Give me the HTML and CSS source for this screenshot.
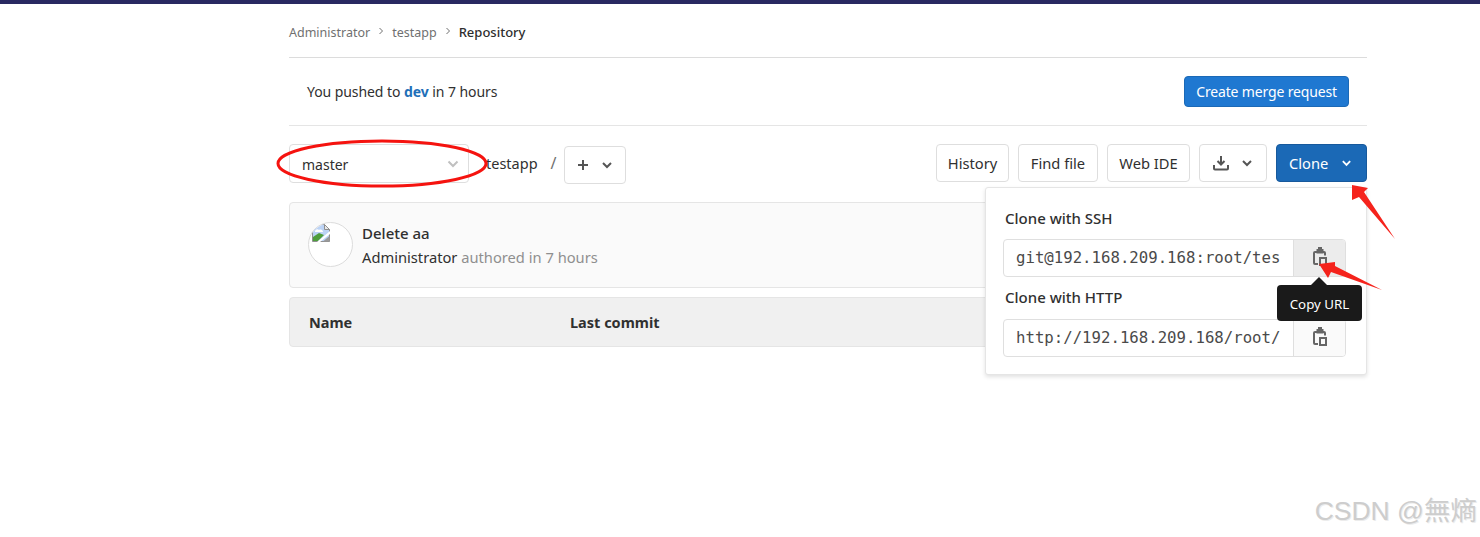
FILE: index.html
```html
<!DOCTYPE html>
<html lang="en">
<head>
<meta charset="utf-8">
<title>Repository</title>
<link rel="stylesheet" href="styles.css">
</head>
<body>
<div class="topbar"></div>
<main class="page">
  <nav class="crumbs">
    <span>Administrator</span>
    <svg class="sep" viewBox="0 0 8 8"><path d="M2.500 1 5.500 4 2.500 7" fill="none" stroke="currentColor" stroke-width="1"/></svg>
    <span>testapp</span>
    <svg class="sep" viewBox="0 0 8 8"><path d="M2.500 1 5.500 4 2.500 7" fill="none" stroke="currentColor" stroke-width="1"/></svg>
    <strong>Repository</strong>
  </nav>
  <section class="pushed">
    <span class="pushed-text">You pushed to <b class="branch">dev</b> in 7 hours</span>
    <button class="btn primary-light">Create merge request</button>
  </section>
  <section class="toolbar">
    <div class="left">
      <div class="select"><span>master</span>
        <svg class="chev pale" viewBox="0 0 12 8"><path d="M1.500 1.500 6 6l4.500-4.500" fill="none" stroke="currentColor" stroke-width="2"/></svg>
      </div>
      <span class="repo">testapp</span>
      <span class="slash">/</span>
      <button class="btn plus">
        <svg class="plus-i" viewBox="0 0 12 12"><path d="M6 1v10M1 6h10" fill="none" stroke="currentColor" stroke-width="2"/></svg>
        <svg class="chev" viewBox="0 0 12 8"><path d="M2 2 6 6l4-4" fill="none" stroke="currentColor" stroke-width="2"/></svg>
      </button>
    </div>
    <div class="right">
      <button class="btn w-history">History</button>
      <button class="btn w-find">Find file</button>
      <button class="btn w-ide">Web IDE</button>
      <button class="btn dl">
        <svg class="dl-i" viewBox="0 0 16 16"><path d="M8 1v8M4.500 6 8 9.500 11.500 6" fill="none" stroke="currentColor" stroke-width="2"/><path d="M1 10v3.500a1 1 0 0 0 1 1h12a1 1 0 0 0 1-1V10" fill="none" stroke="currentColor" stroke-width="2"/></svg>
        <svg class="chev" viewBox="0 0 12 8"><path d="M2 2 6 6l4-4" fill="none" stroke="currentColor" stroke-width="2"/></svg>
      </button>
      <button class="btn clone">Clone
        <svg class="chev" viewBox="0 0 12 8"><path d="M2 2 6 6l4-4" fill="none" stroke="currentColor" stroke-width="2"/></svg>
      </button>
    </div>
  </section>
  <section class="commit">
    <div class="avatar">
      <svg class="broken" viewBox="0 0 18 18">
        <path d="M.5.500h12l5 5v12H.5z" fill="#bcd3f5" stroke="#8f8f8f"/>
        <path d="M3 7c1-2 3-2 4-1 2-1 4 0 4 2H3z" fill="#fff"/>
        <path d="M12.500.5v5h5z" fill="#e8e8e8" stroke="#8f8f8f"/>
        <path d="M1 17V13l6-4 5 2-6 6z" fill="#4f9e3c"/>
        <path d="M5 18 18 7v3L8 18z" fill="#fff"/>
        <path d="M11 17.500 17.500 12v5.500z" fill="#9a9a9a"/>
      </svg>
    </div>
    <div class="commit-text">
      <div class="title">Delete aa</div>
      <div class="meta">Administrator <span class="muted">authored in 7 hours</span></div>
    </div>
  </section>
  <section class="table-head">
    <span class="c-name">Name</span>
    <span>Last commit</span>
  </section>

  <aside class="dropdown">
    <label class="dd-label">Clone with SSH</label>
    <div class="field hover">
      <span class="url">git@192.168.209.168:root/tes</span>
      <span class="copy"><svg class="clip" viewBox="0 0 14 19"><path d="M4 5H2a1 1 0 0 0-1 1V16a1 1 0 0 0 1 1h3M10 5h1a1 1 0 0 1 1 1V8.500" fill="none" stroke="currentColor" stroke-width="2"/><path d="M5 0h4v2h1.500v4.500h-7V2H5z" fill="currentColor"/><rect x="7" y="11" width="6" height="7" fill="none" stroke="currentColor" stroke-width="2"/></svg></span>
    </div>
    <label class="dd-label second">Clone with HTTP</label>
    <div class="field lower">
      <span class="url">http://192.168.209.168/root/</span>
      <span class="copy"><svg class="clip" viewBox="0 0 14 19"><path d="M4 5H2a1 1 0 0 0-1 1V16a1 1 0 0 0 1 1h3M10 5h1a1 1 0 0 1 1 1V8.500" fill="none" stroke="currentColor" stroke-width="2"/><path d="M5 0h4v2h1.500v4.500h-7V2H5z" fill="currentColor"/><rect x="7" y="11" width="6" height="7" fill="none" stroke="currentColor" stroke-width="2"/></svg></span>
    </div>
    <div class="tooltip">Copy URL</div>
  </aside>
</main>

<svg class="marks" viewBox="0 0 1480 537">
  <ellipse cx="382" cy="163.500" rx="104" ry="22.500" fill="none" stroke="#f5130f" stroke-width="3"/>
  <path d="M1352 185 1368 188 1364 192 1395 239 1359 197 1352 200z" fill="#f5231c"/>
  <path d="M1319 264 1335 262 1335 266 1382 290 1331 272 1328 278z" fill="#f5231c"/>
</svg>
<div class="watermark">CSDN @無熵</div>
</body>
</html>
```

FILE: styles.css
```css
* { box-sizing: border-box; }
html, body { margin: 0; height: 537px; overflow: hidden; background: #fff; }
body {
  font-family: "Noto Sans", "Open Sans", sans-serif;
  font-size: 14px;
  color: #303030;
  position: relative;
}
.topbar { height: 4px; background: #292961; }
.page { width: 1078px; margin-left: 289px; position: relative; }

.crumbs {
  height: 54px;
  border-bottom: 1px solid #dcdcdc;
  display: flex;
  align-items: center;
  gap: 7px;
  font-size: 12.500px;
  color: #707070;
  padding-top: 3px;
}
.crumbs strong { color: #2e2e2e; font-weight: 500; font-size: 13px; }
.sep { width: 8px; height: 8px; margin: -3px 0 0 0; color: #707070; }

.pushed {
  height: 68px;
  border-bottom: 1px solid #e5e5e5;
  display: flex;
  align-items: center;
  justify-content: space-between;
  padding: 0 18px;
}
.pushed-text { letter-spacing: -.07px; }
.branch { color: #1f6fb8; font-weight: 700; }

.btn {
  font: inherit;
  font-size: 14.700px;
  height: 38px;
  padding: 0 12px;
  background: #fff;
  color: #303030;
  border: 1px solid #dedede;
  border-radius: 4px;
  display: inline-flex;
  align-items: center;
  justify-content: center;
}
.w-history { width: 73px; padding: 0; }
.w-find { width: 80px; padding: 0; }
.w-ide { width: 83px; padding: 0; }
.primary-light {
  font-size: 14px;
  letter-spacing: -.15px;
  height: 31px;
  background: #1f78d1;
  border-color: #1b69b6;
  color: #fff;
  padding: 0 11px;
}

.toolbar {
  display: flex;
  justify-content: space-between;
  margin-top: 18px;
  height: 38px;
}
.left, .right { display: flex; align-items: center; }
.right { gap: 9px; }
.select {
  width: 180px;
  height: 39px;
  margin-top: 1px;
  border: 1px solid #dedede;
  border-radius: 4px;
  display: flex;
  align-items: center;
  justify-content: space-between;
  padding: 1px 9px 0 12px;
}
.chev { width: 12px; height: 8px; color: #555; }
.chev.pale { color: #c0c0c0; }
.repo { margin-left: 17px; font-size: 14.500px; }
.slash { margin-left: 13px; color: #707070; font-size: 16px; }
.plus { margin-left: 7px; margin-top: 4px; width: 62px; padding: 0 12px; justify-content: space-between; height: 38px; }
.plus-i { width: 12px; height: 12px; color: #555; }
.dl { width: 68px; justify-content: space-between; padding: 0 13px; }
.dl-i { width: 16px; height: 16px; color: #555; }
.clone {
  width: 91px;
  background: #1b69b6;
  border-color: #17599c;
  color: #fff;
  justify-content: space-between;
  padding: 0 14px 0 12px;
}
.clone .chev { color: #fff; width: 11px; }

.commit {
  margin-top: 20px;
  height: 86px;
  border: 1px solid #e5e5e5;
  border-radius: 4px;
  background: #fafafa;
  display: flex;
  align-items: center;
  padding: 0 0 0 18px;
  gap: 9px;
}
.avatar {
  width: 45px;
  height: 45px;
  margin-top: -2px;
  border: 1px solid #dcdcdc;
  border-radius: 50%;
  background: #fff;
  flex: none;
  overflow: hidden;
}
.broken { width: 18px; height: 18px; display: block; margin: 1px 0 0 3px; }
.title { font-size: 15px; font-weight: 500; line-height: 20px; }
.meta { font-size: 14.700px; line-height: 20px; margin-top: 4px; }
.muted { color: #8f8f8f; }

.table-head {
  margin-top: 9px;
  height: 50px;
  border: 1px solid #e5e5e5;
  border-radius: 4px;
  background: #f0f0f0;
  display: flex;
  align-items: center;
  padding-left: 19px;
  font-weight: 700;
  font-size: 14.500px;
}
.c-name { width: 261px; }

.dropdown {
  position: absolute;
  left: 696px;
  top: 183px;
  width: 382px;
  height: 188px;
  background: #fff;
  border: 1px solid #e5e5e5;
  border-radius: 3px;
  box-shadow: 0 2px 4px rgba(0,0,0,.12);
  padding: 20px 20px 0 17px;
}
.dd-label { display: block; font-weight: 500; font-size: 15px; line-height: 20px; margin-left: 2px; }
.dd-label.second { margin-top: 10px; }
.field {
  margin-top: 11px;
  height: 38px;
  border: 1px solid #dfdfdf;
  border-radius: 4px;
  display: flex;
  background: #fff;
  overflow: hidden;
}
.field.lower { margin-top: 12px; }
.url {
  flex: 1;
  min-width: 0;
  padding: 0 0 0 12px;
  font-family: "DejaVu Sans Mono", monospace;
  font-size: 15.700px;
  line-height: 36px;
  white-space: nowrap;
  color: #4a4a4a;
}
.copy {
  width: 52px;
  flex: none;
  border-left: 1px solid #dfdfdf;
  background: #fafafa;
  display: flex;
  align-items: center;
  justify-content: center;
  color: #666;
}
.hover .copy { background: #ececec; }
.clip { width: 14px; height: 19px; margin-top: -3px; }

.tooltip {
  position: absolute;
  left: 291px;
  top: 97px;
  width: 85px;
  height: 36px;
  padding-top: 1px;
  background: #1a1a1a;
  color: #fff;
  border-radius: 4px;
  font-size: 13.300px;
  display: flex;
  align-items: center;
  justify-content: center;
}
.tooltip::before {
  content: "";
  position: absolute;
  left: 34px;
  top: -8px;
  border: 8px solid transparent;
  border-top: 0;
  border-bottom-color: #1a1a1a;
}

.marks { position: absolute; left: 0; top: 0; width: 1480px; height: 537px; pointer-events: none; }
.watermark {
  position: absolute;
  right: 3px;
  top: 491px;
  font-family: "Liberation Sans", "Noto Sans CJK TC", sans-serif;
  font-size: 26.500px;
  line-height: 40px;
  color: #cdcdcd;
  text-shadow: 1px 1px 0 #ececec;
  white-space: nowrap;
}
```
